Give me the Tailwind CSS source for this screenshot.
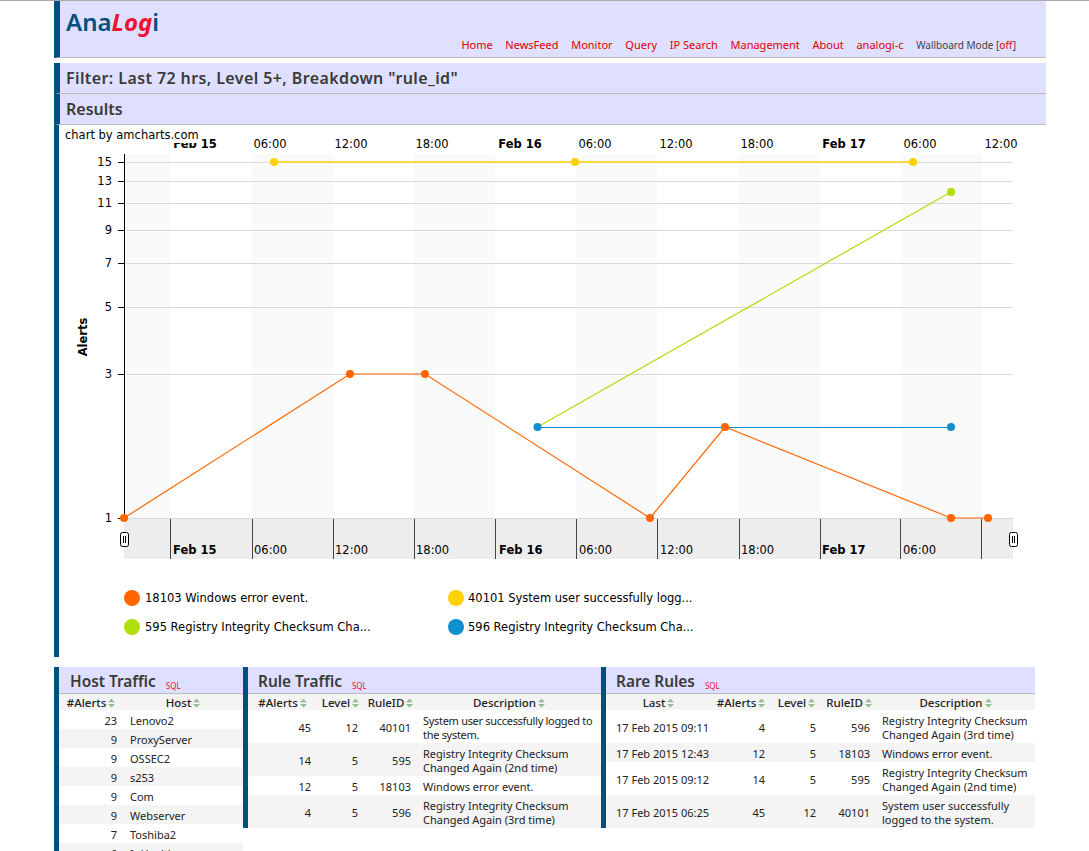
<!DOCTYPE html>
<html lang="en">
  <head>
    <meta charset="UTF-8" />
    <title>AnaLogi</title>
    <script src="https://cdn.jsdelivr.net/npm/@tailwindcss/browser@4"></script>
  </head>
  <body class="bg-white h-[851px] overflow-hidden border-t border-[#aaaaaa] font-['Noto_Sans',sans-serif] text-[#222222]">
    <div class="ml-[54px] w-[992px]">
      <!-- header -->
      <div class="h-[57px] bg-[#dfdfff] border-l-[6px] border-b border-l-[#00507f] border-b-[#bbbbbb] flex justify-between">
        <div class="pl-[6px] pt-[3px] text-[24px] leading-[36px] font-semibold text-[#00507f]">Ana<span class="italic text-[#ee1133] font-bold">Log</span>i</div>
        <div class="flex gap-[12.7px] pr-[30px] pt-[37px] text-[11px] leading-[14px] text-[#e00000]">
          <a>Home</a><a>NewsFeed</a><a>Monitor</a><a>Query</a><a>IP Search</a><a>Management</a><a>About</a><a>analogi-c</a>
          <span class="text-[#444444] text-[10px]">Wallboard Mode [<a class="text-[#e00000]">off</a>]</span>
        </div>
      </div>

      <!-- section titles -->
      <div class="mt-[5px] h-[31px] bg-[#dfdfff] border-l-[6px] border-b border-l-[#00507f] border-b-[#bbbbbb] pl-[6px] text-[16px] tracking-[0.4px] leading-[30px] font-semibold text-[#3a3a3a]">Filter: Last 72 hrs, Level 5+, Breakdown "rule_id"</div>
      <div class="h-[31px] bg-[#dfdfff] border-l-[6px] border-b border-l-[#00507f] border-b-[#bbbbbb] pl-[6px] text-[16px] leading-[30px] font-semibold text-[#3a3a3a]">Results</div>

      <!-- chart -->
      <div class="border-l-[5px] border-[#00507f] h-[532px]">
        <svg class="block font-['DejaVu_Sans',sans-serif] text-[11.5px]" width="987" height="532" viewBox="59 125 987 532">
          <g fill="#fafafa">
            <rect x="124" y="154" width="46" height="364" />
            <rect x="252" y="154" width="81" height="364" />
            <rect x="414" y="154" width="81" height="364" />
            <rect x="576" y="154" width="81" height="364" />
            <rect x="739" y="154" width="81" height="364" />
            <rect x="901" y="154" width="81" height="364" />
          </g>
          <g stroke="#d9d9d9" stroke-width="1">
            <path d="M124 162.5H1013M124 181.5H1013M124 203.5H1013M124 230.5H1013M124 263.5H1013M124 307.5H1013M124 374.5H1013M124 518.5H1013" />
          </g>
          <path d="M118 162.5H124M118 181.5H124M118 203.5H124M118 230.5H124M118 263.5H124M118 307.5H124M118 374.5H124M118 518.5H124" stroke="#000" />
          <path d="M124.5 154V518" stroke="#000" />
          <g fill="#000" text-anchor="end">
            <text x="112" y="166">15</text>
            <text x="112" y="185">13</text>
            <text x="112" y="207">11</text>
            <text x="112" y="234">9</text>
            <text x="112" y="267">7</text>
            <text x="112" y="311">5</text>
            <text x="112" y="378">3</text>
            <text x="112" y="522">1</text>
          </g>
          <text x="87" y="337" transform="rotate(-90 87 337)" text-anchor="middle" font-weight="700" fill="#000">Alerts</text>

          <g fill="#000" text-anchor="middle">
            <text x="195" y="148" font-weight="700">Feb 15</text>
            <text x="270" y="148">06:00</text>
            <text x="351" y="148">12:00</text>
            <text x="432" y="148">18:00</text>
            <text x="520" y="148" font-weight="700">Feb 16</text>
            <text x="595" y="148">06:00</text>
            <text x="676" y="148">12:00</text>
            <text x="757" y="148">18:00</text>
            <text x="844" y="148" font-weight="700">Feb 17</text>
            <text x="920" y="148">06:00</text>
            <text x="1001" y="148">12:00</text>
          </g>
          <rect x="62" y="127" width="136" height="16" fill="#fff" />
          <text x="65" y="139" fill="#000">chart by amcharts.com</text>

          <!-- scrollbar -->
          <rect x="124" y="519" width="889" height="40" fill="#ededed" />
          <path d="M170.5 519V559M252.5 519V559M333.5 519V559M414.5 519V559M495.5 519V559M576.5 519V559M657.5 519V559M739.5 519V559M820.5 519V559M900.5 519V559M981.5 519V559" stroke="#444" />
          <g fill="#000">
            <text x="173" y="554" font-weight="700">Feb 15</text>
            <text x="254" y="554">06:00</text>
            <text x="335" y="554">12:00</text>
            <text x="416" y="554">18:00</text>
            <text x="499" y="554" font-weight="700">Feb 16</text>
            <text x="579" y="554">06:00</text>
            <text x="660" y="554">12:00</text>
            <text x="741" y="554">18:00</text>
            <text x="822" y="554" font-weight="700">Feb 17</text>
            <text x="903" y="554">06:00</text>
          </g>
          <g fill="#fff" stroke="#000">
            <rect x="120.5" y="532.5" width="8" height="14" rx="2" />
            <rect x="1009.5" y="532.5" width="8" height="14" rx="2" />
          </g>
          <path d="M123.5 536V543M125.5 536V543M1012.5 536V543M1014.5 536V543" stroke="#000" />

          <!-- series -->
          <path d="M274 162H575H913" fill="none" stroke="#fcd202" stroke-width="1.5" />
          <g fill="#fcd202"><circle cx="274" cy="162" r="4" /><circle cx="575" cy="162" r="4" /><circle cx="913" cy="162" r="4" /></g>
          <path d="M537.5 427L951 192" fill="none" stroke="#b0de09" stroke-width="1.2" />
          <circle cx="951" cy="192" r="4" fill="#b0de09" />
          <path d="M537.5 427.5H951" fill="none" stroke="#0d8ecf" />
          <circle cx="537.5" cy="427" r="4" fill="#0d8ecf" /><circle cx="951" cy="427" r="4" fill="#0d8ecf" />
          <path d="M124 518L350 374H425L650 518L725 427L951 518H988" fill="none" stroke="#ff6600" stroke-width="1.2" />
          <g fill="#ff6600">
            <circle cx="124" cy="518" r="4" /><circle cx="350" cy="374" r="4" /><circle cx="425" cy="374" r="4" />
            <circle cx="650" cy="518" r="4" /><circle cx="725" cy="427" r="4" /><circle cx="951" cy="518" r="4" /><circle cx="988" cy="518" r="4" />
          </g>

          <!-- legend -->
          <circle cx="132" cy="598" r="8" fill="#ff6600" />
          <text x="145" y="602" fill="#000">18103 Windows error event.</text>
          <circle cx="456" cy="598" r="8" fill="#fcd202" />
          <text x="468" y="602" fill="#000">40101 System user successfully logg...</text>
          <circle cx="132" cy="627" r="8" fill="#b0de09" />
          <text x="145" y="631" fill="#000">595 Registry Integrity Checksum Cha...</text>
          <circle cx="456" cy="627" r="8" fill="#0d8ecf" />
          <text x="468" y="631" fill="#000">596 Registry Integrity Checksum Cha...</text>
        </svg>
      </div>

      <!-- widgets -->
      <div class="mt-[10px] flex items-start text-[11px] leading-[14px] text-[#222222]">
        <div class="w-[189px] border-l-[5px] border-[#00507f]">
          <div class="h-[27px] bg-[#dfdfff] border-b border-[#bbbbbb] pl-[11px] text-[15.4px] leading-[30px] font-semibold text-[#3a3a3a] whitespace-nowrap">Host Traffic<a class="ml-[10px] text-[8px] font-normal text-[#ee1133] relative top-[2px]">SQL</a></div>
          <table class="w-full table-fixed border-collapse [&_td]:pt-[2px] [&_th]:pt-[2px]">
            <colgroup><col class="w-[64px]" /><col /></colgroup>
            <thead class="bg-[#f4f4f4] text-[11.5px]">
              <tr class="h-[16px]">
                <th class="font-medium p-0 whitespace-nowrap">#Alerts<svg class="inline ml-[2px] align-[-1px]" width="7" height="10" viewBox="0 0 8 10"><path d="M4 0L8 4H0ZM4 10L0 6H8Z" fill="#8fbf8f" /></svg></th>
                <th class="font-medium p-0 whitespace-nowrap">Host<svg class="inline ml-[2px] align-[-1px]" width="7" height="10" viewBox="0 0 8 10"><path d="M4 0L8 4H0ZM4 10L0 6H8Z" fill="#8fbf8f" /></svg></th>
              </tr>
            </thead>
            <tbody>
              <tr class="h-[19px]"><td class="text-right pr-[6px]">23</td><td class="pl-[7px]">Lenovo2</td></tr>
              <tr class="h-[19px] bg-[#f4f4f4]"><td class="text-right pr-[6px]">9</td><td class="pl-[7px]">ProxyServer</td></tr>
              <tr class="h-[19px]"><td class="text-right pr-[6px]">9</td><td class="pl-[7px]">OSSEC2</td></tr>
              <tr class="h-[19px] bg-[#f4f4f4]"><td class="text-right pr-[6px]">9</td><td class="pl-[7px]">s253</td></tr>
              <tr class="h-[19px]"><td class="text-right pr-[6px]">9</td><td class="pl-[7px]">Com</td></tr>
              <tr class="h-[19px] bg-[#f4f4f4]"><td class="text-right pr-[6px]">9</td><td class="pl-[7px]">Webserver</td></tr>
              <tr class="h-[19px]"><td class="text-right pr-[6px]">7</td><td class="pl-[7px]">Toshiba2</td></tr>
              <tr class="h-[19px] bg-[#f4f4f4]"><td class="text-right pr-[6px]">6</td><td class="pl-[7px]">InHealth</td></tr>
            </tbody>
          </table>
        </div>

        <div class="w-[358px] border-l-[5px] border-[#00507f]">
          <div class="h-[27px] bg-[#dfdfff] border-b border-[#bbbbbb] pl-[10px] text-[15.4px] leading-[30px] font-semibold text-[#3a3a3a] whitespace-nowrap">Rule Traffic<a class="ml-[10px] text-[8px] font-normal text-[#ee1133] relative top-[2px]">SQL</a></div>
          <table class="w-full table-fixed border-collapse [&_td]:pt-[2px] [&_th]:pt-[2px]">
            <colgroup><col class="w-[69px]" /><col class="w-[47px]" /><col class="w-[53px]" /><col /></colgroup>
            <thead class="bg-[#f4f4f4] text-[11.5px]">
              <tr class="h-[16px]">
                <th class="font-medium p-0 whitespace-nowrap">#Alerts<svg class="inline ml-[2px] align-[-1px]" width="7" height="10" viewBox="0 0 8 10"><path d="M4 0L8 4H0ZM4 10L0 6H8Z" fill="#8fbf8f" /></svg></th>
                <th class="font-medium p-0 whitespace-nowrap">Level<svg class="inline ml-[2px] align-[-1px]" width="7" height="10" viewBox="0 0 8 10"><path d="M4 0L8 4H0ZM4 10L0 6H8Z" fill="#8fbf8f" /></svg></th>
                <th class="font-medium p-0 whitespace-nowrap">RuleID<svg class="inline ml-[2px] align-[-1px]" width="7" height="10" viewBox="0 0 8 10"><path d="M4 0L8 4H0ZM4 10L0 6H8Z" fill="#8fbf8f" /></svg></th>
                <th class="font-medium p-0 whitespace-nowrap">Description<svg class="inline ml-[2px] align-[-1px]" width="7" height="10" viewBox="0 0 8 10"><path d="M4 0L8 4H0ZM4 10L0 6H8Z" fill="#8fbf8f" /></svg></th>
              </tr>
            </thead>
            <tbody>
              <tr class="h-[33px]"><td class="text-right pr-[6px]">45</td><td class="text-right pr-[6px]">12</td><td class="text-right pr-[6px]">40101</td><td class="pl-[6px] tracking-[-0.3px]">System user successfully logged to<br />the system.</td></tr>
              <tr class="h-[33px] bg-[#f4f4f4]"><td class="text-right pr-[6px]">14</td><td class="text-right pr-[6px]">5</td><td class="text-right pr-[6px]">595</td><td class="pl-[6px] pr-[2px]">Registry Integrity Checksum Changed Again (2nd time)</td></tr>
              <tr class="h-[19px]"><td class="text-right pr-[6px]">12</td><td class="text-right pr-[6px]">5</td><td class="text-right pr-[6px]">18103</td><td class="pl-[6px] pr-[2px]">Windows error event.</td></tr>
              <tr class="h-[33px] bg-[#f4f4f4]"><td class="text-right pr-[6px]">4</td><td class="text-right pr-[6px]">5</td><td class="text-right pr-[6px]">596</td><td class="pl-[6px] pr-[2px]">Registry Integrity Checksum Changed Again (3rd time)</td></tr>
            </tbody>
          </table>
        </div>

        <div class="w-[434px] border-l-[5px] border-[#00507f]">
          <div class="h-[27px] bg-[#dfdfff] border-b border-[#bbbbbb] pl-[10px] text-[15.4px] leading-[30px] font-semibold text-[#3a3a3a] whitespace-nowrap">Rare Rules<a class="ml-[10px] text-[8px] font-normal text-[#ee1133] relative top-[2px]">SQL</a></div>
          <table class="w-full table-fixed border-collapse [&_td]:pt-[2px] [&_th]:pt-[2px]">
            <colgroup><col class="w-[105px]" /><col class="w-[60px]" /><col class="w-[51px]" /><col class="w-[54px]" /><col /></colgroup>
            <thead class="bg-[#f4f4f4] text-[11.5px]">
              <tr class="h-[16px]">
                <th class="font-medium p-0 whitespace-nowrap">Last<svg class="inline ml-[2px] align-[-1px]" width="7" height="10" viewBox="0 0 8 10"><path d="M4 0L8 4H0ZM4 10L0 6H8Z" fill="#8fbf8f" /></svg></th>
                <th class="font-medium p-0 whitespace-nowrap">#Alerts<svg class="inline ml-[2px] align-[-1px]" width="7" height="10" viewBox="0 0 8 10"><path d="M4 0L8 4H0ZM4 10L0 6H8Z" fill="#8fbf8f" /></svg></th>
                <th class="font-medium p-0 whitespace-nowrap">Level<svg class="inline ml-[2px] align-[-1px]" width="7" height="10" viewBox="0 0 8 10"><path d="M4 0L8 4H0ZM4 10L0 6H8Z" fill="#8fbf8f" /></svg></th>
                <th class="font-medium p-0 whitespace-nowrap">RuleID<svg class="inline ml-[2px] align-[-1px]" width="7" height="10" viewBox="0 0 8 10"><path d="M4 0L8 4H0ZM4 10L0 6H8Z" fill="#8fbf8f" /></svg></th>
                <th class="font-medium p-0 whitespace-nowrap">Description<svg class="inline ml-[2px] align-[-1px]" width="7" height="10" viewBox="0 0 8 10"><path d="M4 0L8 4H0ZM4 10L0 6H8Z" fill="#8fbf8f" /></svg></th>
              </tr>
            </thead>
            <tbody>
              <tr class="h-[33px]"><td class="pl-[10px] whitespace-nowrap">17 Feb 2015 09:11</td><td class="text-right pr-[6px]">4</td><td class="text-right pr-[6px]">5</td><td class="text-right pr-[6px]">596</td><td class="pl-[6px]">Registry Integrity Checksum Changed Again (3rd time)</td></tr>
              <tr class="h-[19px] bg-[#f4f4f4]"><td class="pl-[10px] whitespace-nowrap">17 Feb 2015 12:43</td><td class="text-right pr-[6px]">12</td><td class="text-right pr-[6px]">5</td><td class="text-right pr-[6px]">18103</td><td class="pl-[6px]">Windows error event.</td></tr>
              <tr class="h-[33px]"><td class="pl-[10px] whitespace-nowrap">17 Feb 2015 09:12</td><td class="text-right pr-[6px]">14</td><td class="text-right pr-[6px]">5</td><td class="text-right pr-[6px]">595</td><td class="pl-[6px]">Registry Integrity Checksum Changed Again (2nd time)</td></tr>
              <tr class="h-[33px] bg-[#f4f4f4]"><td class="pl-[10px] whitespace-nowrap">17 Feb 2015 06:25</td><td class="text-right pr-[6px]">45</td><td class="text-right pr-[6px]">12</td><td class="text-right pr-[6px]">40101</td><td class="pl-[6px]">System user successfully logged to the system.</td></tr>
            </tbody>
          </table>
        </div>
      </div>
    </div>
  </body>
</html>
